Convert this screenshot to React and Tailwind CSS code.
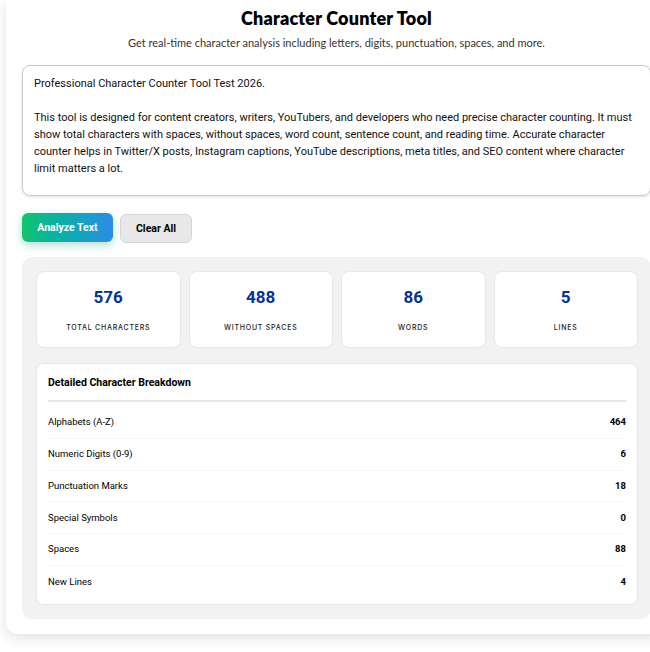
import React from "react";

const text =
  "Professional Character Counter Tool Test 2026.\n\nThis tool is designed for content creators, writers, YouTubers, and developers who need precise character counting. It must show total characters with spaces, without spaces, word count, sentence count, and reading time. Accurate character counter helps in Twitter/X posts, Instagram captions, YouTube descriptions, meta titles, and SEO content where character limit matters a lot.";

const stats = [
  { value: "576", label: "Total Characters" },
  { value: "488", label: "Without Spaces" },
  { value: "86", label: "Words" },
  { value: "5", label: "Lines" },
];

const rows = [
  ["Alphabets (A-Z)", "464"],
  ["Numeric Digits (0-9)", "6"],
  ["Punctuation Marks", "18"],
  ["Special Symbols", "0"],
  ["Spaces", "88"],
  ["New Lines", "4"],
];

export default function App() {
  return (
    <div className="w-[650px] h-[652px] overflow-hidden bg-white font-['Roboto',sans-serif]">
      <div className="ml-[6px] w-[661px] bg-white rounded-b-[12px] shadow-[0_4px_14px_rgba(0,0,0,0.12)] px-[16px] pt-[7px] pb-[15px]">
        <h1 className="text-center text-[18px] leading-[22px] font-extrabold text-black font-['Lato',sans-serif] tracking-[0.01em]">
          Character Counter Tool
        </h1>
        <p className="mt-[6px] text-center text-[11px] leading-[16px] text-[#333] font-['Lato',sans-serif]">
          Get real-time character analysis including letters, digits, punctuation, spaces, and more.
        </p>
        <div className="mt-[14px] h-[131px] rounded-[8px] border border-[#c8c8c8] shadow-[0_1px_3px_rgba(0,0,0,0.12)] px-[11px] pt-[9px] text-[11px] leading-[17px] text-[#111] whitespace-pre-wrap">
          {text}
        </div>
        <div className="mt-[17px] flex gap-[7px]">
          <button className="h-[29px] w-[91px] rounded-[6px] bg-gradient-to-r from-[#14c46a] to-[#2a8be6] text-white text-[10.5px] font-bold shadow-[0_3px_8px_rgba(20,160,140,0.35)]">
            Analyze Text
          </button>
          <button className="mt-[1px] h-[29px] w-[72px] rounded-[6px] bg-[#e8e8e8] border border-[#d6d6d6] text-black text-[10.5px] font-bold">
            Clear All
          </button>
        </div>
        <div className="mt-[14px] rounded-[10px] bg-[#f2f2f2] pt-[14px] pl-[14px] pr-[13px] pb-[14px]">
          <div className="grid grid-cols-4 gap-[8px]">
            {stats.map((s) => (
              <div
                key={s.label}
                className="h-[77px] rounded-[8px] bg-white border border-[#e8e8e8] flex flex-col items-center"
              >
                <div className="mt-[14px] text-[17px] leading-[22px] font-bold text-[#00339c]">
                  {s.value}
                </div>
                <div className="mt-[15px] text-[7px] leading-[10px] font-medium uppercase tracking-[0.11em] text-[#222] font-['Inter',sans-serif]">
                  {s.label}
                </div>
              </div>
            ))}
          </div>
          <div className="mt-[15px] rounded-[8px] bg-white border border-[#e8e8e8] px-[11px] pt-[12px] pb-[6px]">
            <div className="text-[10.5px] leading-[14px] font-bold text-black">
              Detailed Character Breakdown
            </div>
            <div className="mt-[10px] border-b-2 border-[#e6e6e6]" />
            <div className="mt-[5px]">
              {rows.map(([label, value], i) => (
                <div
                  key={label}
                  className={`h-[31.8px] flex items-center justify-between text-[9.5px] text-black ${
                    i < rows.length - 1 ? "border-b border-[#f7f7f7]" : ""
                  }`}
                >
                  <span>{label}</span>
                  <span className="font-bold">{value}</span>
                </div>
              ))}
            </div>
          </div>
        </div>
      </div>
    </div>
  );
}
